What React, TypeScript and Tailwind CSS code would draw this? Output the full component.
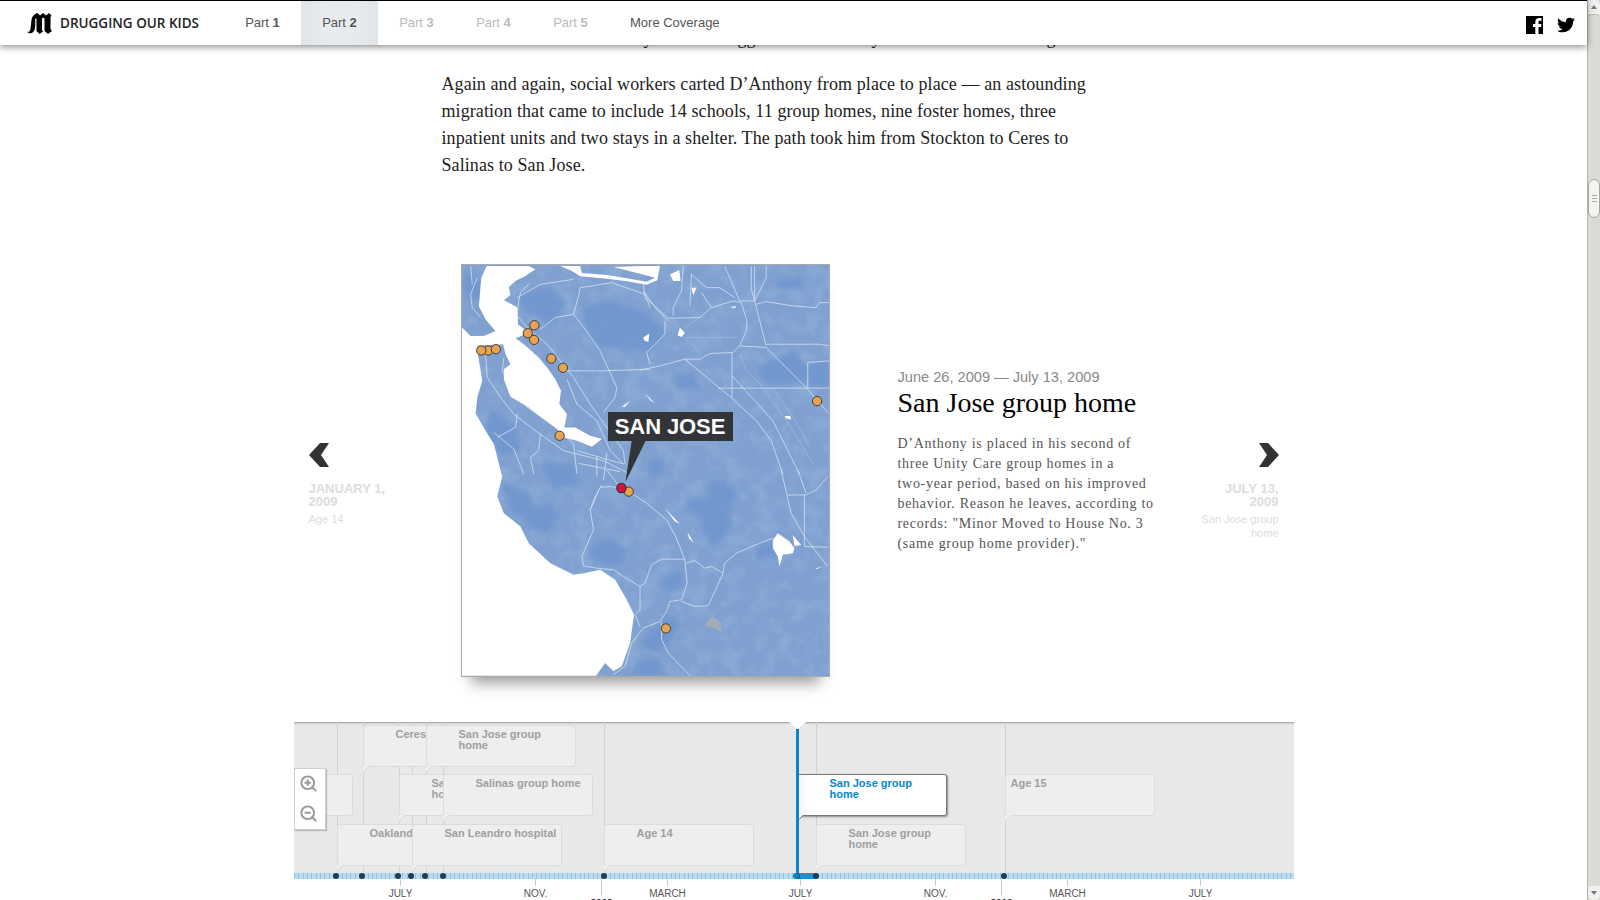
import { ZoomIn, ZoomOut } from "lucide-react";
import { FaTwitter } from "react-icons/fa";

const parts = [
  { n: "1", cls: "text-[#555]" },
  { n: "2", cls: "text-[#555] bg-[radial-gradient(circle,#e9ecee_30%,#dfe4e8_100%)]" },
  { n: "3", cls: "text-[#bbb]" },
  { n: "4", cls: "text-[#bbb]" },
  { n: "5", cls: "text-[#bbb]" },
];

const Nav = () => (
  <div className="relative z-30 flex h-[45px] flex-none items-stretch border-t border-black bg-white shadow-[0_2px_7px_rgba(0,0,0,0.45)] font-['Liberation_Sans',sans-serif] text-[13px]">
    <div className="flex w-[224px] flex-none items-center pl-[27px] pt-[1px]">
      <svg viewBox="0 0 25 21" className="h-[21px] w-[25px]" fill="#000">
        <path d="M0 18.500 C1.500 19.500 3 18.500 3.500 16 L4.500 7 C5 3 8 0.500 10.500 0 L13 2.500 L16 0 L19 2.500 L22 0 L24.500 2.500 L23.500 4 V16 L25 18 L21 21 L17.500 18 V5.500 L16.500 4.500 L15 5.500 V17 L16 18.500 L12.500 21 L9.500 18 V6 L8.500 5 C8 7 8.500 11 8 15 C7.500 19.500 3 22.500 0 18.500Z" />
      </svg>
      <span className="ml-[8px] whitespace-nowrap font-['Open_Sans',sans-serif] text-[13.500px] font-semibold text-[#222]">
        DRUGGING OUR KIDS
      </span>
    </div>
    {parts.map((p) => (
      <div key={p.n} className={`flex w-[77px] flex-none items-center justify-center ${p.cls}`}>
        Part&nbsp;<b>{p.n}</b>
      </div>
    ))}
    <div className="flex items-center pl-[21px] text-[#555]">More Coverage</div>
    <div className="ml-auto flex items-center gap-[14px] pr-[12px] pt-[3px] text-black">
      <svg viewBox="0 0 17 18" className="h-[18px] w-[17px]">
        <path d="M0 0H17V18H12.500V11H15L15.400 8H12.500V6.300C12.500 5.300 12.900 4.800 14 4.800H15.500V2.200C15 2.100 14.200 2 13.300 2 11 2 9.300 3.400 9.300 6V8H7V11H9.300V18H0Z" fill="#000" />
      </svg>
      <FaTwitter className="h-[18px] w-[18px]" />
    </div>
  </div>
);

const roads = [
  "M575 730 620 760 680 810 710 865 735 930 742 1000 725 1050 690 1055 680 1085 663 1110 665 1170 685 1210 750 1278",
  "M725 1055 765 1070 805 1068 830 1015 850 970 855 940 890 910 960 880 1000 865",
  "M735 928 665 928 635 945 615 1000 600 1010 550 980 520 960 470 955 430 948 425 920 460 840 450 780 465 740 485 705",
  "M600 1010 600 1080 585 1095 600 1130M660 1115 610 1135 575 1180 555 1250 520 1275",
  "M740 940 765 932 795 955 815 950 850 970",
  "M1025 660 1055 790 1095 860 1165 950M1075 660 1100 730M1045 735 1100 735 1130 720 1165 680M1095 735 1095 890 1165 892",
  "M600 360 660 347 735 327 780 327 810 310 880 307 900 287 920 242 922 212 905 157 880 152 815 172 780 202 685 204 650 172 615 142 610 102",
  "M735 327 880 447 950 512 995 572 1030 672",
  "M877 307 877 442M877 377 1000 512 1080 672",
  "M900 287 980 292 1100 412 1165 487",
  "M980 282 1140 282 1170 287",
  "M835 414 1170 414",
  "M1105 412 1105 337 1170 332",
  "M855 47 900 152 945 152 945 47M935 47 935 117 945 152 980 287M945 152 980 82 980 47",
  "M950 162 980 154 1060 167 1130 172 1140 157 1170 157",
  "M675 212 675 252 620 307 630 342M610 122 650 177 685 212",
  "M730 47 725 122 700 172 700 197M750 167 755 72 800 112 840 112 885 142M785 127 815 172",
  "M400 192 435 237 480 302 530 412 525 442 490 487",
  "M300 237 345 202 400 192 415 137 420 112 515 97 615 132 630 172",
  "M265 102 240 127 235 152 230 197 260 232 320 282 360 332 400 382 450 462 500 532 550 602 555 642",
  "M370 362 490 362 630 357",
  "M380 387 410 462 470 512 510 602 550 642",
  "M135 312 140 382 180 442 220 492 285 542 370 602 490 632 560 667",
  "M190 322 185 362 225 432 260 472 350 532 400 582 410 672",
  "M110 82 90 132 95 172 120 202M90 47 95 102",
  "M170 562 225 532 230 492M160 547 220 597 250 672M300 552 295 602 270 622 280 672",
  "M410 602 550 642M470 620 470 680M500 610 490 690M415 640 540 665",
  "M230 142 300 102 400 87",
  "M500 660 530 700 560 715 510 710 480 712 450 780",
];

const thinRoads = [
  "M735 232 765 212 780 202M735 262 890 262M740 267 780 307",
  "M270 462 310 437 370 417",
  "M900 310 920 360 960 400 1010 470 1060 540 1120 640",
  "M1000 414 1060 500 1110 590",
];

const patches = [
  "M810 695 860 690 890 730 870 790 880 830 825 900 790 850 780 800 740 780 745 745 800 750Z",
  "M470 875 520 865 560 900 540 950 480 940 440 920Z",
  "M250 780 330 760 360 800 320 850 260 830Z",
  "M600 1180 680 1090 720 1120 690 1180 640 1210Z",
  "M590 1240 650 1220 680 1278 570 1278Z",
  "M420 180 500 150 620 190 680 240 640 300 540 300 460 280Z",
  "M230 130 330 110 380 160 340 220 260 190Z",
  "M620 640 660 620 680 670 640 690Z",
  "M1000 90 1080 80 1100 110 1020 120Z",
  "M950 350 1060 300 1110 360 1090 400 980 400Z",
  "M1110 340 1170 330 1170 410 1110 410Z",
  "M150 480 220 520 240 600 180 620 130 540Z",
  "M70 60 130 100 140 150 90 150 70 120Z",
  "M300 640 400 640 420 700 340 720Z",
  "M180 700 260 720 300 800 220 800Z",
  "M700 380 760 370 780 420 720 420Z",
  "M660 990 720 960 740 1010 680 1030Z",
  "M950 890 1010 870 1010 920 950 930Z",
];

const markers = [
  [282, 225],
  [262, 249],
  [281, 269],
  [143, 301],
  [122, 301],
  [166, 297],
  [333, 325],
  [368, 353],
  [358, 557],
  [566, 725],
  [1133, 453],
  [678, 1136],
];

const CaliforniaMap = () => (
  <svg viewBox="64 44 1105 1235" className="h-full w-full" preserveAspectRatio="none">
    <defs>
      <filter id="soft">
        <feGaussianBlur stdDeviation="8" />
      </filter>
      <filter id="softer">
        <feGaussianBlur stdDeviation="1" />
      </filter>
      <filter id="mottle" x="0" y="0" width="100%" height="100%">
        <feTurbulence type="fractalNoise" baseFrequency="0.02" numOctaves="4" seed="7" />
        <feColorMatrix values="0 0 0 0 0.42  0 0 0 0 0.58  0 0 0 0 0.81  3 0 0 0 -1.300" />
      </filter>
    </defs>
    <rect x="64" y="44" width="1105" height="1235" fill="#80a1d0" />
    <rect x="64" y="44" width="1105" height="1235" filter="url(#mottle)" opacity="0.22" />
    <g filter="url(#soft)" fill="#6c94ce" opacity="0.75">
      {patches.map((d) => (
        <path key={d} d={d} />
      ))}
    </g>
    <path d="M795 1125 820 1100 845 1120 845 1150 825 1135 805 1130Z" fill="#a1abba" filter="url(#softer)" />
    <g fill="none" stroke="#d9e3f2" strokeWidth="2.300" strokeLinejoin="round">
      {roads.map((d) => (
        <path key={d} d={d} />
      ))}
    </g>
    <g fill="none" stroke="#b8cae6" strokeWidth="1.300">
      {thinRoads.map((d) => (
        <path key={d} d={d} />
      ))}
    </g>
    <g fill="#fff" filter="url(#softer)">
      {/* ocean */}
      <path d="M64 232 90 257 125 257 185 277 190 282 110 287 110 302 125 392 110 442 105 490 135 542 160 582 185 680 170 740 190 790 240 830 265 880 330 940 400 975 430 970 480 960 525 990 560 1050 582 1095 570 1180 545 1250 520 1265 495 1240 468 1278 64 1278Z" />
      {/* bay, traced at its own crop offset */}
      <path
        transform="translate(60 42)"
        d="M62 40 78 5 205 5 225 15 195 35 165 50 145 68 150 92 130 108 170 130 172 180 192 195 188 212 165 222 190 240 235 280 262 312 285 345 302 380 297 420 320 450 312 490 345 490 390 515 425 525 395 548 350 530 310 520 290 495 245 462 205 430 150 398 130 345 130 315 150 300 135 270 128 240 115 238 65 222 70 215 105 200 75 165 55 125 62 105 58 88Z"
      />
      <path transform="translate(60 42)" d="M58 88 130 108 170 130 172 180 188 212 128 232 105 200 75 165 55 125Z" />
      {/* delta */}
      <path d="M360 47 420 47 425 68 500 74 560 84 620 94 645 82 600 70 520 50 600 47 660 47 652 90 620 103 560 93 500 85 420 78 395 62Z" />
      <path d="M690 72 718 60 722 92 700 92Z" />
      <path d="M755 112 770 112 760 135Z" />
      <path d="M720 232 735 248 725 260 713 255Z" />
      <path d="M610 262 628 250 625 275 612 270Z" />
      <path d="M870 170 890 168 885 174Z" />
      <path d="M1035 498 1052 498 1055 508 1040 505Z" />
      <path d="M545 470 570 452 555 470Z" />
      <path d="M615 430 645 460 630 450Z" />
      <path d="M1000 870 1015 850 1050 875 1065 895 1060 910 1030 915 1020 950 1015 920 1000 895Z" />
      <path d="M1060 855 1085 885 1065 888Z" />
      <path d="M675 775 720 822 705 815Z" />
      <path d="M742 845 762 880 748 865Z" />
      <path d="M1130 955 1150 950 1130 958Z" />
    </g>
    {markers.map(([cx, cy]) => (
      <circle key={`${cx}-${cy}`} cx={cx} cy={cy} r="14" fill="#e9a24e" stroke="#33373f" strokeWidth="2.800" />
    ))}
    <circle cx="544" cy="714" r="14" fill="#d9123f" stroke="#2d2d33" strokeWidth="3.200" />
    <path d="M575 572 617 572 556 696Z" fill="#333438" />
  </svg>
);

const cards = [
  { left: -91, row: 1, pad: 32, text: "" },
  { left: 69, row: 0, pad: 32, text: "Ceres" },
  { left: 43, row: 2, pad: 32, text: "Oakland" },
  { left: 105, row: 1, pad: 32, text: "San Jose group\nhome" },
  { left: 118, row: 2, pad: 32, text: "San Leandro hospital" },
  { left: 132, row: 0, pad: 32, text: "San Jose group\nhome" },
  { left: 149, row: 1, pad: 32, text: "Salinas group home" },
  { left: 310, row: 2, pad: 32, text: "Age 14" },
  { left: 503, row: 1, pad: 33, text: "San Jose group\nhome", active: true },
  { left: 522, row: 2, pad: 32, text: "San Jose group\nhome" },
  { left: 711, row: 1, pad: 5, text: "Age 15" },
];

const rowTops = [3, 52, 102];

const TimelineCard = ({ card }: { card: (typeof cards)[number] }) => (
  <div className="absolute" style={{ left: card.left, top: rowTops[card.row], zIndex: card.active ? 5 : 1 }}>
    <div
      style={{ paddingLeft: card.pad }}
      className={
        card.active
          ? "h-[42px] w-[150px] whitespace-pre-line rounded-r-[3px] border border-l-0 border-[#777] bg-gradient-to-r from-[#f2f2f2] from-0% to-white to-[8%] pr-[2px] pt-[3px] text-[11px] font-bold leading-[11px] text-[#0088cc] shadow-[1px_1px_2px_rgba(0,0,0,0.4)]"
          : "h-[42px] w-[150px] whitespace-pre-line rounded-[3px] border border-[#dcdcdc] bg-[#eeeeee] pr-[2px] pt-[3px] text-[11px] font-bold leading-[11px] text-[#a0a0a0]"
      }
    >
      {card.text}
    </div>
    <svg viewBox="0 0 6 6" className="absolute left-0 top-[41px] h-[6px] w-[6px]">
      <path d="M0 0H6L0 6Z" fill={card.active ? "#ffffff" : "#eeeeee"} />
      <path d="M6 0.500 0.500 6" stroke={card.active ? "#777" : "#d8d8d8"} fill="none" />
    </svg>
  </div>
);

const stems = [43, 69, 105, 118, 132, 149, 310, 522, 711];
const dots = [42, 68, 104, 117, 131, 149, 310, 503, 522, 710];
const months = [
  { x: 107, t: "JULY" },
  { x: 242, t: "NOV." },
  { x: 374, t: "MARCH" },
  { x: 507, t: "JULY" },
  { x: 642, t: "NOV." },
  { x: 774, t: "MARCH" },
  { x: 907, t: "JULY" },
];
const years = [
  { x: 308, t: "2009" },
  { x: 708, t: "2010" },
];

const Timeline = () => (
  <div className="mt-[45px] w-[1000px] font-['Liberation_Sans',sans-serif]">
    <div className="relative h-[151px] overflow-hidden bg-[#e8e8e8] shadow-[inset_0_3px_2px_-2px_rgba(0,0,0,0.35)]">
      {stems.map((x) => (
        <div key={x} className="absolute bottom-0 top-0 w-px bg-[#d2d2d2]" style={{ left: x }} />
      ))}
      {cards.map((c) => (
        <TimelineCard key={`${c.left}`} card={c} />
      ))}
      <div className="absolute bottom-0 left-[502px] top-[7px] z-10 w-[3px] bg-[#0a85cb]" />
      <svg viewBox="0 0 17 7" className="absolute left-[495px] top-0 z-10 h-[7px] w-[17px]">
        <path d="M0 0H17L8.500 7Z" fill="#fff" />
      </svg>
      <div className="absolute left-0 top-[46px] z-20 flex h-[62px] w-[32px] flex-col items-start justify-center gap-[11px] border border-[#cfcfcf] bg-white pb-[2px] pl-[4px] text-[#999] shadow-[1px_1px_1px_rgba(0,0,0,0.2)]">
        <ZoomIn size={19} strokeWidth={2.5} />
        <ZoomOut size={19} strokeWidth={2.5} />
      </div>
    </div>
    <div className="relative h-[6px] bg-[#b8dcf1] bg-[repeating-linear-gradient(90deg,#93c2de_0,#93c2de_1px,transparent_1px,transparent_4.330px)]">
      <div className="absolute bottom-0 left-[502px] top-0 w-[20px] bg-[#1f8fd0]" />
      {dots.map((x) => (
        <div key={x} className="absolute top-0 h-[6px] w-[6px] rounded-full bg-[#1c3f57]" style={{ left: x - 3 }} />
      ))}
      <div className="absolute left-[499px] top-0 h-[6px] w-[6px] rounded-full bg-[#0a85cb]" />
    </div>
    <div className="relative h-[21px] overflow-hidden text-[10px] leading-[12px] text-[#555]">
      {months.map((m) => (
        <div key={m.x} className="absolute top-0 flex w-[60px] -translate-x-1/2 flex-col items-center" style={{ left: m.x }}>
          <div className="h-[7px] w-px bg-[#ccc]" />
          <span className="mt-[2px]">{m.t}</span>
        </div>
      ))}
      {years.map((y) => (
        <div key={y.x} className="absolute top-0 flex w-[60px] -translate-x-1/2 flex-col items-center" style={{ left: y.x }}>
          <div className="h-[16px] w-px bg-[#ccc]" />
          <span className="mt-[3px] font-bold text-[#222]">{y.t}</span>
        </div>
      ))}
    </div>
  </div>
);

const Chevron = ({ right }: { right?: boolean }) => (
  <svg viewBox="0 0 20 24" className="h-[24px] w-[20px]" fill="#333">
    <path d={right ? "M0 0H9L20 12 9 24H0L8 12Z" : "M20 0H11L0 12 11 24H20L12 12Z"} />
  </svg>
);

const Scrollbar = () => (
  <div className="flex h-[900px] w-[13px] flex-none flex-col border-l border-[#b5b3ae] bg-[#dcdad5]">
    <div className="flex h-[14px] flex-none items-center justify-center rounded-t-[5px] bg-[#f1f0ee]">
      <div className="h-0 w-0 border-x-[3px] border-b-[4px] border-x-transparent border-b-[#777]" />
    </div>
    <div className="flex-1 rounded-t-[5px] border-t border-[#c4c2bd] pt-[164px]">
      <div className="flex h-[39px] flex-col items-center justify-center gap-[2px] rounded-[6px] border border-[#a8a6a1] bg-[#f4f3f1]">
        <div className="h-px w-[5px] bg-[#aaa]" />
        <div className="h-px w-[5px] bg-[#aaa]" />
        <div className="h-px w-[5px] bg-[#aaa]" />
      </div>
    </div>
    <div className="flex h-[14px] flex-none items-center justify-center rounded-b-[5px] bg-[#f1f0ee]">
      <div className="h-0 w-0 border-x-[3px] border-t-[4px] border-x-transparent border-t-[#777]" />
    </div>
  </div>
);

const App = () => (
  <div className="flex h-[900px] w-full overflow-hidden bg-white">
    <div className="flex min-w-0 flex-1 flex-col">
      <Nav />
      <div className="mx-auto w-[1000px]">
        {/* tail of the line scrolled under the nav */}
        <div className="-mt-[20px] flex h-[20px] pl-[148px] font-['Liberation_Serif',serif] text-[18px] leading-[27px] text-[#222]">
          <span className="ml-[202px]">y</span>
          <span className="ml-[85px]">gg</span>
          <span className="ml-[116px]">y</span>
          <span className="ml-[166px]">g</span>
        </div>
        <p className="w-[810px] pl-[148px] pt-[26px] font-['Liberation_Serif',serif] text-[18px] leading-[27px] tracking-[0.09px] text-[#222]">
          Again and again, social workers carted D’Anthony from place to place — an astounding migration that came to include 14 schools, 11 group homes, nine foster homes, three inpatient units and two stays in a shelter. The path took him from Stockton to Ceres to Salinas to San Jose.
        </p>
        <div className="mt-[85px] flex h-[413px] w-[1000px] px-[15px] font-['Liberation_Sans',sans-serif]">
          <div className="w-[152px] flex-none pt-[179px]">
            <Chevron />
            <div className="mt-[15px] w-[85px] text-[13px] font-bold leading-[13px] text-[#ddd]">JANUARY 1, 2009</div>
            <div className="mt-[4px] text-[11px] leading-[14px] text-[#ddd]">Age 14</div>
          </div>
          <div className="relative h-[413px] w-[369px] flex-none border border-[#aaa] bg-white shadow-[0_16px_14px_-10px_rgba(0,0,0,0.4)]">
            <CaliforniaMap />
            <div className="absolute left-[146px] top-[147px] flex h-[29px] w-[125px] items-center justify-center bg-[#333438] text-[22px] font-bold tracking-[-0.1px] text-white">
              SAN JOSE
            </div>
          </div>
          <div className="ml-[68px] w-[258px] flex-none pt-[104px]">
            <div className="text-[14.600px] leading-[18px] text-[#888]">June 26, 2009 — July 13, 2009</div>
            <h2 className="mt-[1px] font-['Liberation_Serif',serif] text-[28px] leading-[32px] text-black">San Jose group home</h2>
            <p className="mt-[15px] font-['Liberation_Serif',serif] text-[14px] leading-[20px] tracking-[0.7px] text-[#555]">
              D’Anthony is placed in his second of three Unity Care group homes in a <span className="whitespace-nowrap">two-year</span> period, based on his improved behavior. Reason he leaves, according to records: "Minor Moved to House No. 3 (same group home provider)."
            </p>
          </div>
          <div className="flex flex-1 flex-col items-end pt-[179px] text-right">
            <Chevron right />
            <div className="mt-[15px] w-[70px] text-[13px] font-bold leading-[13px] text-[#ddd]">JULY 13, 2009</div>
            <div className="mt-[4px] w-[80px] text-[11px] leading-[14px] text-[#ddd]">San Jose group home</div>
          </div>
        </div>
        <Timeline />
      </div>
    </div>
    <Scrollbar />
  </div>
);

export default App;
